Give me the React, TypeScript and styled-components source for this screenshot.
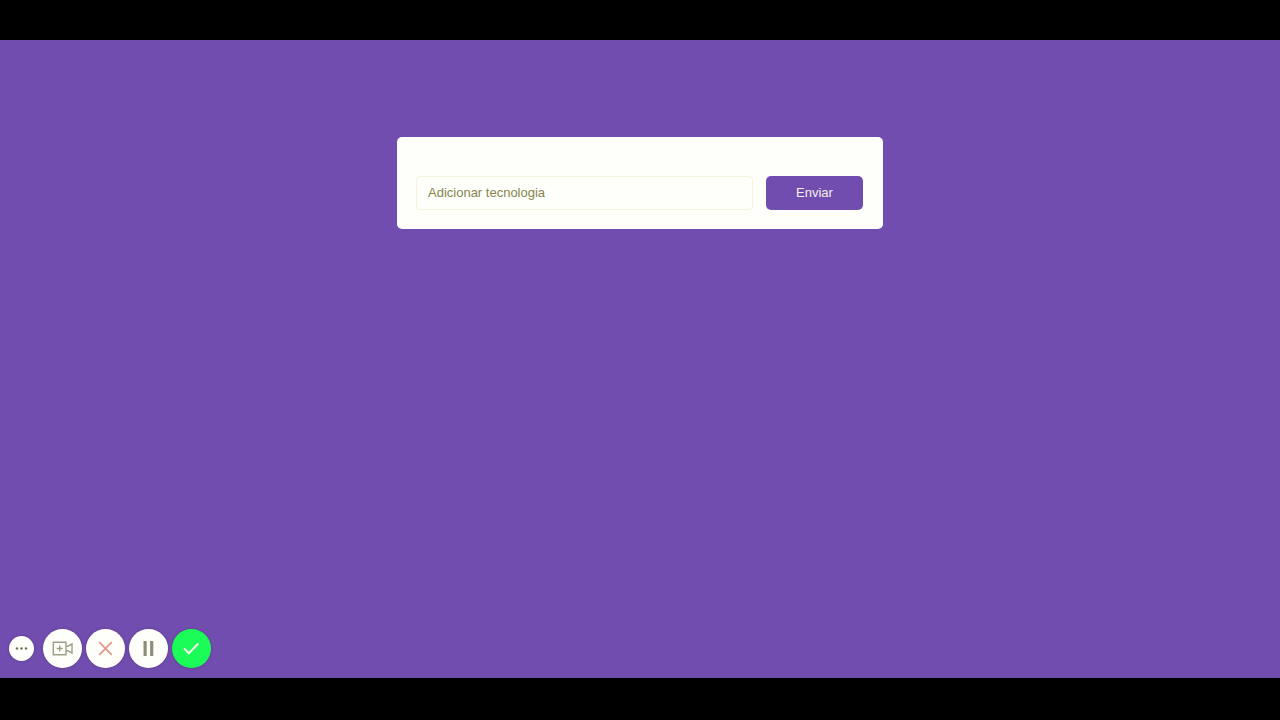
import React from "react";
import styled, { createGlobalStyle } from "styled-components";

const GlobalStyle = createGlobalStyle`
  * { box-sizing: border-box; }
  body { margin: 0; background: #000; }
  body, button, input { font-family: "Liberation Sans", Arial, sans-serif; }
`;

const Frame = styled.div`
  display: flex;
  flex-direction: column;
  min-height: 100vh;
  padding: 40px 0 42px;
  background: #000;
`;

const Page = styled.main`
  flex: 1;
  display: flex;
  flex-direction: column;
  justify-content: space-between;
  padding: 97px 0 10px;
  background: #714db0;
`;

const Form = styled.form`
  display: flex;
  gap: 13px;
  width: calc(100% - 32px);
  max-width: 486px;
  margin: 0 auto;
  padding: 39px 20px 19px 19px;
  border-radius: 5px;
  background: #fefefb;
`;

const TextField = styled.input`
  flex: 1;
  min-width: 0;
  height: 34px;
  padding: 0 11px 2px;
  border: 1px solid #f4f3dc;
  border-radius: 4px;
  background: transparent;
  color: #55554a;
  font-size: 13px;
  outline: none;
  &::placeholder { color: #85854c; opacity: 1; }
`;

const SubmitButton = styled.button`
  width: 97px;
  height: 34px;
  padding: 0 0 2px;
  border: 0;
  border-radius: 5px;
  background: #714db0;
  color: #f6f0e8;
  font-size: 13px;
  cursor: pointer;
`;

const Toolbar = styled.div`
  display: flex;
  align-items: center;
  gap: 4px;
  padding: 0 9px;
`;

const RoundButton = styled.button<{ $small?: boolean; $fill?: string }>`
  display: grid;
  place-items: center;
  width: ${(p) => (p.$small ? "25px" : "39px")};
  height: ${(p) => (p.$small ? "25px" : "39px")};
  margin-right: ${(p) => (p.$small ? "5px" : "0")};
  padding: 0;
  border: 0;
  border-radius: 50%;
  background: ${(p) => p.$fill ?? "#fefefb"};
  box-shadow: 0 0 3px rgba(60, 40, 50, 0.4);
  cursor: pointer;
`;

const Icon = styled.svg`
  display: block;
  fill: none;
`;

export default function App() {
  return (
    <Frame>
      <GlobalStyle />
      <Page>
        <Form onSubmit={(e) => e.preventDefault()}>
          <TextField aria-label="Adicionar tecnologia" placeholder="Adicionar tecnologia" />
          <SubmitButton type="submit">Enviar</SubmitButton>
        </Form>
        <Toolbar role="toolbar">
          <RoundButton type="button" $small aria-label="Mais opções">
            <Icon width="13" height="3" viewBox="0 0 13 3">
              <g fill="#6f6f55">
                <circle cx="2" cy="1.5" r="1.2" />
                <circle cx="6.5" cy="1.5" r="1.2" />
                <circle cx="11" cy="1.5" r="1.2" />
              </g>
            </Icon>
          </RoundButton>
          <RoundButton type="button" aria-label="Câmera">
            <Icon width="21" height="15" viewBox="0 0 21 15" stroke="#9a9f88" strokeWidth="1.4">
              <path d="M1.3 1.2H14V13.8H1.3ZM14 5.2H16L20 3V12L16 9.8H14M7.7 4.5V10.5M4.7 7.5H10.7" />
            </Icon>
          </RoundButton>
          <RoundButton type="button" aria-label="Cancelar">
            <Icon width="15" height="15" viewBox="0 0 15 15" stroke="#e29a8c" strokeWidth="1.8">
              <path d="M1.2 1.2L13.8 13.8M13.8 1.2L1.2 13.8" />
            </Icon>
          </RoundButton>
          <RoundButton type="button" aria-label="Pausar">
            <Icon width="11" height="15" viewBox="0 0 11 15">
              <path fill="#8e8e78" d="M0.5 0H3.7V15H0.5ZM7.1 0H10.3V15H7.1Z" />
            </Icon>
          </RoundButton>
          <RoundButton type="button" $fill="#1cfc58" aria-label="Concluir">
            <Icon width="17" height="13" viewBox="0 0 17 13" stroke="#f6fbe8" strokeWidth="2">
              <path d="M1.1 6.5L5.9 11.3L15.3 1.5" />
            </Icon>
          </RoundButton>
        </Toolbar>
      </Page>
    </Frame>
  );
}
